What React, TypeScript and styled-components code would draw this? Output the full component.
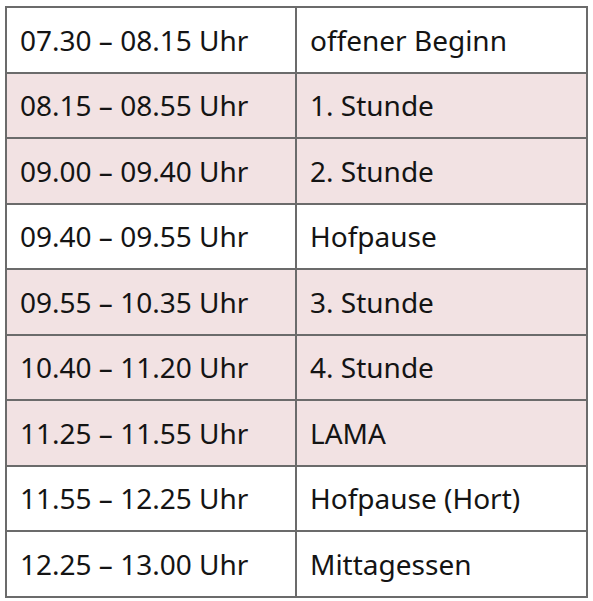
import * as React from 'react';
import styled, { createGlobalStyle } from 'styled-components';

const rows = [
  { time: '07.30 – 08.15 Uhr', label: 'offener Beginn', shaded: false },
  { time: '08.15 – 08.55 Uhr', label: '1. Stunde', shaded: true },
  { time: '09.00 – 09.40 Uhr', label: '2. Stunde', shaded: true },
  { time: '09.40 – 09.55 Uhr', label: 'Hofpause', shaded: false },
  { time: '09.55 – 10.35 Uhr', label: '3. Stunde', shaded: true },
  { time: '10.40 – 11.20 Uhr', label: '4. Stunde', shaded: true },
  { time: '11.25 – 11.55 Uhr', label: 'LAMA', shaded: true },
  { time: '11.55 – 12.25 Uhr', label: 'Hofpause (Hort)', shaded: false },
  { time: '12.25 – 13.00 Uhr', label: 'Mittagessen', shaded: false },
];

export default (): any => {
  return (
    <>
      <GlobalStyle />
      <Wrapper>
        <Schedule>
          <tbody>
            {rows.map((row) => (
              <Row key={row.time} shaded={row.shaded}>
                <TimeCell>{row.time}</TimeCell>
                <LabelCell>{row.label}</LabelCell>
              </Row>
            ))}
          </tbody>
        </Schedule>
      </Wrapper>
    </>
  );
};

const GlobalStyle = createGlobalStyle`
  body {
    margin: 0;
    background: #fff;
    font-family: 'Noto Sans', 'Open Sans', sans-serif;
  }
`;

const Wrapper = styled.div`
  padding: 6px 5px;
`;

const Schedule = styled.table`
  width: 583px;
  border-collapse: collapse;
  table-layout: fixed;
`;

const Row = styled.tr<{ shaded: boolean }>`
  height: 65.5px;
  background-color: ${(p) => (p.shaded ? '#f2e2e3' : '#ffffff')};
`;

const Cell = styled.td`
  border: 2px solid #6b6b6b;
  padding: 0 13px;
  color: #141414;
  font-size: 28px;
  white-space: nowrap;
  vertical-align: middle;
`;

const TimeCell = styled(Cell)`
  width: 262px;
`;

const LabelCell = styled(Cell)``;
